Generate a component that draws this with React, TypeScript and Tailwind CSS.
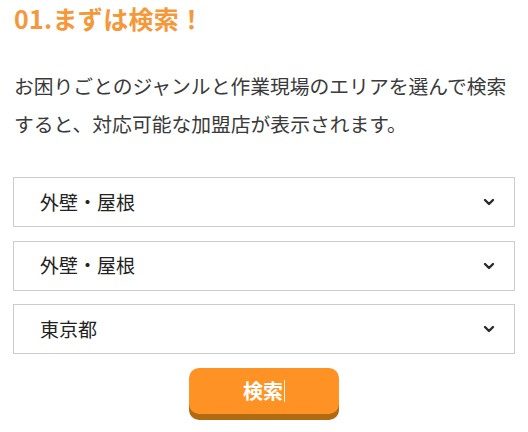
import { ChevronDown } from "lucide-react";

const fields = ["外壁・屋根", "外壁・屋根", "東京都"];

const App = () => {
  return (
    <div className="w-[528px] h-[432px] bg-white overflow-hidden px-[13px] font-['Noto_Sans_CJK_JP','Noto_Sans',sans-serif]">
      <h2 className="pl-[1px] text-[25px] leading-[36px] font-bold text-[#f5983a] tracking-[0.3px]">01.まずは検索！</h2>

      <p className="mt-[31px] pl-[1px] text-[19.8px] leading-[38px] text-[#3a3a3a] whitespace-nowrap">
        お困りごとのジャンルと作業現場のエリアを選んで検索
        <br />
        すると、対応可能な加盟店が表示されます。
      </p>

      <div className="mt-[34px] flex flex-col gap-[13.5px]">
        {fields.map((f, i) => (
          <div
            key={i}
            className="h-[50px] border border-[#cccccc] bg-white flex items-center justify-between pl-[26px] pr-[17px]"
          >
            <span className="text-[19px] text-[#222]">{f}</span>
            <ChevronDown className="w-[16px] h-[16px] text-[#2a2a2a]" strokeWidth={3.6} />
          </div>
        ))}
      </div>

      <div className="mt-[14px] flex justify-center">
        <button className="w-[150px] h-[46px] rounded-[10px] bg-[#ff9224] shadow-[0_6px_0_#b06a12] flex items-center justify-center text-white font-bold text-[20px]">
          検索
          <span className="inline-block w-[1px] h-[22px] bg-white/90 ml-[1px]" />
        </button>
      </div>
    </div>
  );
};

export default App;
